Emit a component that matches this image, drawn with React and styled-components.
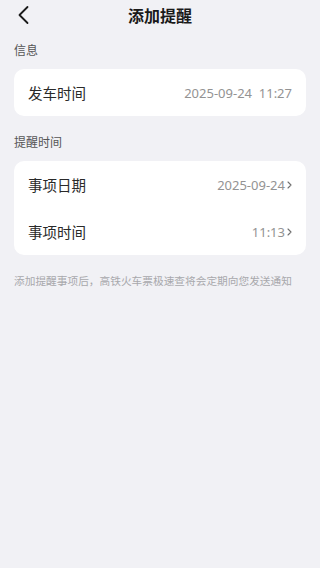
import React from "react";
import styled, { createGlobalStyle } from "styled-components";

const Global = createGlobalStyle`
  html, body { margin: 0; padding: 0; background: #f1f1f5; }
  body { font-family: "Noto Sans CJK SC", "Noto Sans", sans-serif; }
  * { box-sizing: border-box; }
`;

const Page = styled.div`
  width: 320px;
  min-height: 568px;
  background: #f1f1f5;
  padding: 0 14px;
`;

const Header = styled.div`
  height: 30px;
  display: flex;
  align-items: center;
  justify-content: center;
  position: relative;
`;

const Back = styled.div`
  position: absolute;
  left: 2px;
  top: 5px;
  width: 14px;
  height: 20px;
  display: flex;
`;

const Title = styled.div`
  font-size: 16px;
  font-weight: 700;
  color: #1a1a1a;
  line-height: 30px;
`;

const SectionLabel = styled.div`
  font-size: 12px;
  color: #555;
  line-height: 16px;
  margin-top: ${(p) => p.$top}px;
  margin-bottom: ${(p) => p.$bottom}px;
`;

const Card = styled.div`
  background: #fff;
  border-radius: 10px;
  padding: 0 14px;
  display: flex;
  flex-direction: column;
`;

const Row = styled.div`
  height: 47px;
  display: flex;
  align-items: center;
  justify-content: space-between;
`;

const RowLabel = styled.div`
  font-size: 14.5px;
  color: #2a2a2a;
`;

const RowValue = styled.div`
  display: flex;
  align-items: center;
  font-size: 13px;
  color: #939393;
  font-family: "Noto Sans", sans-serif;
  white-space: pre;
  margin-right: ${(p) => (p.$chev ? -1 : 0)}px;
`;

const Note = styled.div`
  margin-top: 19px;
  font-size: 10.7px;
  color: #a8a8ac;
  line-height: 14px;
  white-space: nowrap;
`;

const Chevron = () => (
  <svg width="7" height="10" viewBox="0 0 7 10" style={{ marginLeft: 1 }}>
    <path d="M2 2 L5 5 L2 8" fill="none" stroke="#707070" strokeWidth="1.1" strokeLinecap="round" strokeLinejoin="round" />
  </svg>
);

export default function App() {
  return (
    <>
      <Global />
      <Page>
        <Header>
          <Back>
            <svg width="14" height="20" viewBox="0 0 14 20">
              <path d="M11.5 2 L3.5 10 L11.5 18" fill="none" stroke="#1a1a1a" strokeWidth="1.8" strokeLinecap="round" strokeLinejoin="round" />
            </svg>
          </Back>
          <Title>添加提醒</Title>
        </Header>
        <SectionLabel $top={12} $bottom={11}>信息</SectionLabel>
        <Card>
          <Row>
            <RowLabel>发车时间</RowLabel>
            <RowValue>2025-09-24  11:27</RowValue>
          </Row>
        </Card>
        <SectionLabel $top={18} $bottom={11}>提醒时间</SectionLabel>
        <Card>
          <Row>
            <RowLabel>事项日期</RowLabel>
            <RowValue $chev>2025-09-24<Chevron /></RowValue>
          </Row>
          <Row>
            <RowLabel>事项时间</RowLabel>
            <RowValue $chev>11:13<Chevron /></RowValue>
          </Row>
        </Card>
        <Note>添加提醒事项后，高铁火车票极速查将会定期向您发送通知</Note>
      </Page>
    </>
  );
}
